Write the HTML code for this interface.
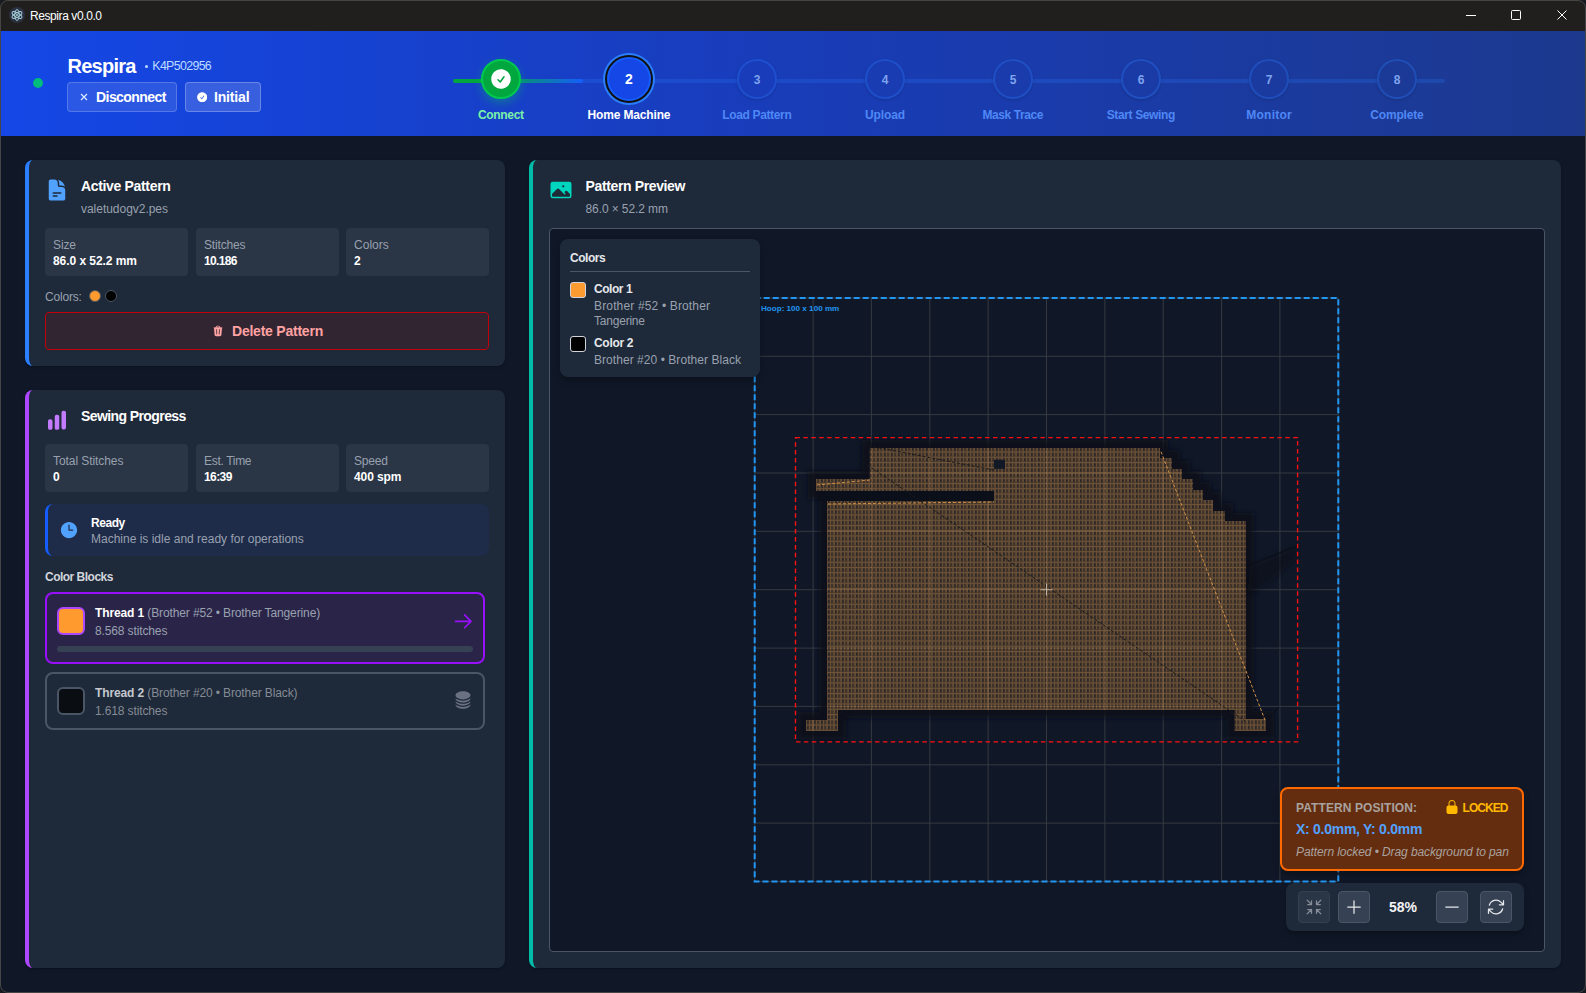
<!DOCTYPE html><html><head><meta charset="utf-8"><style>
*{margin:0;padding:0;box-sizing:border-box}
html,body{width:1586px;height:993px;overflow:hidden;background:#101828;font-family:"Liberation Sans",sans-serif}
.a{position:absolute}
.t{position:absolute;white-space:nowrap}
</style></head><body>
<div class="a" style="left:0px;top:0px;width:1586px;height:993px;background:#181b20;"></div>
<div class="a" style="left:0px;top:0px;width:1586px;height:993px;background:#101828;border-radius:8px;"></div>
<div class="a" style="left:0px;top:0px;width:1586px;height:31px;background:#201f1e;border-radius:8px 8px 0 0;"></div>
<svg class="a" style="left:9px;top:7px;" width="16" height="16" viewBox="0 0 16 16"><circle cx="8" cy="8" r="8" fill="#2b3140"/><g fill="none" stroke="#a9d6e0" stroke-width="0.9"><ellipse cx="8" cy="8" rx="5.5" ry="2.2" transform="rotate(30 8 8)"/><ellipse cx="8" cy="8" rx="5.5" ry="2.2" transform="rotate(-30 8 8)"/><ellipse cx="8" cy="8" rx="2.2" ry="5.5"/></g><circle cx="8" cy="8" r="1" fill="#a9d6e0"/></svg>
<div class="t" style="left:30px;top:9.64px;font-size:12px;line-height:12px;color:#ffffff;font-weight:400;letter-spacing:-0.414px;">Respira v0.0.0</div>
<div class="a" style="left:1466px;top:15px;width:10px;height:1px;background:#fff;"></div>
<div class="a" style="left:1511px;top:10px;width:10px;height:10px;border:1px solid #fff;border-radius:1.5px;"></div>
<svg class="a" style="left:1557px;top:10px;" width="10" height="10" viewBox="0 0 10 10"><path d="M0.5 0.5L9.5 9.5M9.5 0.5L0.5 9.5" stroke="#fff" stroke-width="1"/></svg>
<div class="a" style="left:1px;top:31px;width:1584px;height:105px;background:linear-gradient(90deg,#1447e6 0%,#193cb8 50%,#1c398e 100%);"></div>
<div class="a" style="left:33px;top:78px;width:10px;height:10px;background:#00bc7d;border-radius:50%;"></div>
<div class="t" style="left:67.5px;top:56.07px;font-size:20px;line-height:20px;color:#fff;font-weight:700;letter-spacing:-0.729px;">Respira</div>
<div class="a" style="left:144.8px;top:64.6px;width:3.6px;height:3.6px;background:#bedbff;border-radius:50%;"></div>
<div class="t" style="left:152.3px;top:60.10px;font-size:12.4px;line-height:12.4px;color:#bedbff;font-weight:400;letter-spacing:-0.664px;">K4P502956</div>
<div class="a" style="left:67px;top:82px;width:110px;height:30px;background:rgba(255,255,255,0.1);border:1px solid rgba(255,255,255,0.2);border-radius:4px;"></div>
<svg class="a" style="left:78px;top:91px;" width="12" height="12" viewBox="0 0 12 12"><path d="M3 3L9 9M9 3L3 9" stroke="#dbeafe" stroke-width="1.2" fill="none"/></svg>
<div class="t" style="left:96px;top:89.85px;font-size:14px;line-height:14px;color:#ffffff;font-weight:700;letter-spacing:-0.562px;">Disconnect</div>
<div class="a" style="left:185px;top:82px;width:76px;height:30px;background:rgba(255,255,255,0.15);border:1px solid rgba(255,255,255,0.25);border-radius:4px;"></div>
<svg class="a" style="left:196.8px;top:91.8px;" width="10.4" height="10.4" viewBox="2 2 20 20"><path fill="#fff" fill-rule="evenodd" d="M2.25 12c0-5.385 4.365-9.75 9.75-9.75s9.75 4.365 9.75 9.75-4.365 9.75-9.75 9.75S2.25 17.385 2.25 12Zm13.36-1.814a.75.75 0 1 0-1.22-.872l-3.236 4.53L9.53 12.22a.75.75 0 0 0-1.06 1.06l2.25 2.25a.75.75 0 0 0 1.14-.094l3.75-5.25Z"/></svg>
<div class="t" style="left:214px;top:89.85px;font-size:14px;line-height:14px;color:#ffffff;font-weight:700;letter-spacing:-0.160px;">Initial</div>
<div class="a" style="left:453px;top:79px;width:992px;height:4px;background:rgba(43,127,255,0.22);border-radius:2px;"></div>
<div class="a" style="left:453px;top:79px;width:130px;height:4px;background:linear-gradient(90deg,#00a63e 0%,#00a63e 30%,#155dfc 100%);border-radius:2px;"></div>
<div class="a" style="left:481px;top:59px;width:40px;height:40px;background:#00a63e;border:2px solid #00c950;border-radius:50%;box-shadow:0 4px 10px rgba(0,201,80,0.35);"></div>
<svg class="a" style="left:491px;top:69px;" width="20" height="20" viewBox="2 2 20 20"><path fill="#fff" fill-rule="evenodd" d="M2.25 12c0-5.385 4.365-9.75 9.75-9.75s9.75 4.365 9.75 9.75-4.365 9.75-9.75 9.75S2.25 17.385 2.25 12Zm13.36-1.814a.75.75 0 1 0-1.22-.872l-3.236 4.53L9.53 12.22a.75.75 0 0 0-1.06 1.06l2.25 2.25a.75.75 0 0 0 1.14-.094l3.75-5.25Z"/></svg>
<div class="t" style="left:501px;top:108.94px;font-size:12px;line-height:12px;color:#7bf1a8;font-weight:700;letter-spacing:-0.334px;transform:translateX(-50%);margin-left:-0.167px;">Connect</div>
<div class="a" style="left:603px;top:53px;width:52px;height:52px;background:#2b7fff;border-radius:50%;"></div>
<div class="a" style="left:605px;top:55px;width:48px;height:48px;background:#111111;border-radius:50%;"></div>
<div class="a" style="left:607px;top:57px;width:44px;height:44px;background:#1447e6;border:2px solid #155dfc;border-radius:50%;"></div>
<div class="t" style="left:629px;top:72.35px;font-size:14px;line-height:14px;color:#fff;font-weight:700;transform:translateX(-50%);">2</div>
<div class="t" style="left:629px;top:108.94px;font-size:12px;line-height:12px;color:#ffffff;font-weight:700;letter-spacing:-0.154px;transform:translateX(-50%);margin-left:-0.077px;">Home Machine</div>
<div class="a" style="left:737px;top:59px;width:40px;height:40px;background:#193cba;border:2px solid rgba(43,127,255,0.3);border-radius:50%;box-shadow:0 1px 3px rgba(0,0,0,0.15);"></div>
<div class="t" style="left:757px;top:73.84px;font-size:12px;line-height:12px;color:#7fa4ee;font-weight:700;transform:translateX(-50%);">3</div>
<div class="t" style="left:757px;top:108.94px;font-size:12px;line-height:12px;color:#4f88f5;font-weight:700;letter-spacing:-0.350px;transform:translateX(-50%);margin-left:-0.175px;">Load Pattern</div>
<div class="a" style="left:865px;top:59px;width:40px;height:40px;background:#193cb3;border:2px solid rgba(43,127,255,0.3);border-radius:50%;box-shadow:0 1px 3px rgba(0,0,0,0.15);"></div>
<div class="t" style="left:885px;top:73.84px;font-size:12px;line-height:12px;color:#7fa4ee;font-weight:700;transform:translateX(-50%);">4</div>
<div class="t" style="left:885px;top:108.94px;font-size:12px;line-height:12px;color:#4f88f5;font-weight:700;letter-spacing:-0.133px;transform:translateX(-50%);margin-left:-0.067px;">Upload</div>
<div class="a" style="left:993px;top:59px;width:40px;height:40px;background:#1a3bac;border:2px solid rgba(43,127,255,0.3);border-radius:50%;box-shadow:0 1px 3px rgba(0,0,0,0.15);"></div>
<div class="t" style="left:1013px;top:73.84px;font-size:12px;line-height:12px;color:#7fa4ee;font-weight:700;transform:translateX(-50%);">5</div>
<div class="t" style="left:1013px;top:108.94px;font-size:12px;line-height:12px;color:#4f88f5;font-weight:700;letter-spacing:-0.413px;transform:translateX(-50%);margin-left:-0.206px;">Mask Trace</div>
<div class="a" style="left:1121px;top:59px;width:40px;height:40px;background:#1a3ba6;border:2px solid rgba(43,127,255,0.3);border-radius:50%;box-shadow:0 1px 3px rgba(0,0,0,0.15);"></div>
<div class="t" style="left:1141px;top:73.84px;font-size:12px;line-height:12px;color:#7fa4ee;font-weight:700;transform:translateX(-50%);">6</div>
<div class="t" style="left:1141px;top:108.94px;font-size:12px;line-height:12px;color:#4f88f5;font-weight:700;letter-spacing:-0.371px;transform:translateX(-50%);margin-left:-0.186px;">Start Sewing</div>
<div class="a" style="left:1249px;top:59px;width:40px;height:40px;background:#1b3a9f;border:2px solid rgba(43,127,255,0.3);border-radius:50%;box-shadow:0 1px 3px rgba(0,0,0,0.15);"></div>
<div class="t" style="left:1269px;top:73.84px;font-size:12px;line-height:12px;color:#7fa4ee;font-weight:700;transform:translateX(-50%);">7</div>
<div class="t" style="left:1269px;top:108.94px;font-size:12px;line-height:12px;color:#4f88f5;font-weight:700;letter-spacing:0.219px;transform:translateX(-50%);margin-left:0.109px;">Monitor</div>
<div class="a" style="left:1377px;top:59px;width:40px;height:40px;background:#1b3a98;border:2px solid rgba(43,127,255,0.3);border-radius:50%;box-shadow:0 1px 3px rgba(0,0,0,0.15);"></div>
<div class="t" style="left:1397px;top:73.84px;font-size:12px;line-height:12px;color:#7fa4ee;font-weight:700;transform:translateX(-50%);">8</div>
<div class="t" style="left:1397px;top:108.94px;font-size:12px;line-height:12px;color:#4f88f5;font-weight:700;letter-spacing:-0.182px;transform:translateX(-50%);margin-left:-0.091px;">Complete</div>
<div class="a" style="left:25px;top:160px;width:480px;height:206px;background:#1e2939;border-left:4px solid #2b7fff;border-radius:8px;box-shadow:0 1px 3px rgba(0,0,0,0.3);"></div>
<svg class="a" style="left:45px;top:178px;" width="24" height="24" viewBox="0 0 24 24"><path fill="#51a2ff" fill-rule="evenodd" d="M5.625 1.5c-1.036 0-1.875.84-1.875 1.875v17.25c0 1.035.84 1.875 1.875 1.875h12.75c1.035 0 1.875-.84 1.875-1.875V12.75A3.75 3.75 0 0 0 16.5 9h-1.875a1.875 1.875 0 0 1-1.875-1.875V5.25A3.75 3.75 0 0 0 9 1.5H5.625ZM7.5 15a.75.75 0 0 1 .75-.75h7.5a.75.75 0 0 1 0 1.5h-7.5A.75.75 0 0 1 7.5 15Zm.75 2.25a.75.75 0 0 0 0 1.5H12a.75.75 0 0 0 0-1.5H8.25Z"/><path fill="#51a2ff" d="M12.971 1.816A5.23 5.23 0 0 1 14.25 5.25v1.875c0 .207.168.375.375.375H16.5a5.23 5.23 0 0 1 3.434 1.279 9.768 9.768 0 0 0-6.963-6.963Z"/></svg>
<div class="t" style="left:81px;top:179.35px;font-size:14px;line-height:14px;color:#fff;font-weight:700;letter-spacing:-0.334px;">Active Pattern</div>
<div class="t" style="left:81px;top:202.84px;font-size:12px;line-height:12px;color:#99a1af;font-weight:400;letter-spacing:-0.029px;">valetudogv2.pes</div>
<div class="a" style="left:45px;top:228px;width:143px;height:48px;background:#2a3546;border-radius:4px;"></div>
<div class="t" style="left:53px;top:238.84px;font-size:12px;line-height:12px;color:#99a1af;font-weight:400;letter-spacing:-0.115px;">Size</div>
<div class="t" style="left:53px;top:254.84px;font-size:12px;line-height:12px;color:#fff;font-weight:700;letter-spacing:-0.056px;">86.0 x 52.2 mm</div>
<div class="a" style="left:196px;top:228px;width:143px;height:48px;background:#2a3546;border-radius:4px;"></div>
<div class="t" style="left:204px;top:238.84px;font-size:12px;line-height:12px;color:#99a1af;font-weight:400;letter-spacing:-0.155px;">Stitches</div>
<div class="t" style="left:204px;top:254.84px;font-size:12px;line-height:12px;color:#fff;font-weight:700;letter-spacing:-0.661px;">10.186</div>
<div class="a" style="left:346px;top:228px;width:143px;height:48px;background:#2a3546;border-radius:4px;"></div>
<div class="t" style="left:354px;top:238.84px;font-size:12px;line-height:12px;color:#99a1af;font-weight:400;letter-spacing:0.025px;">Colors</div>
<div class="t" style="left:354px;top:254.84px;font-size:12px;line-height:12px;color:#fff;font-weight:700;letter-spacing:0.326px;">2</div>
<div class="t" style="left:45px;top:291.04px;font-size:12px;line-height:12px;color:#99a1af;font-weight:400;letter-spacing:-0.185px;">Colors:</div>
<div class="a" style="left:89px;top:290px;width:12px;height:12px;background:#ff9a2e;border-radius:50%;border:1px solid #4a5565;"></div>
<div class="a" style="left:105px;top:290px;width:12px;height:12px;background:#000;border-radius:50%;border:1px solid #4a5565;"></div>
<div class="a" style="left:45px;top:312px;width:444px;height:38px;background:rgba(130,24,26,0.2);border:1px solid #c10007;border-radius:4px;"></div>
<svg class="a" style="left:212px;top:325px;" width="12" height="12" viewBox="0 0 24 24"><path fill="#ffa2a2" fill-rule="evenodd" d="M16.5 4.478v.227a48.816 48.816 0 0 1 3.878.512.75.75 0 1 1-.256 1.478l-.209-.035-1.005 13.07a3 3 0 0 1-2.991 2.77H8.084a3 3 0 0 1-2.991-2.77L4.087 6.66l-.209.035a.75.75 0 0 1-.256-1.478A48.567 48.567 0 0 1 7.5 4.705v-.227c0-1.564 1.213-2.9 2.816-2.951a52.662 52.662 0 0 1 3.369 0c1.603.051 2.815 1.387 2.815 2.951Zm-6.136-1.452a51.196 51.196 0 0 1 3.273 0C14.39 3.05 15 3.684 15 4.478v.113a49.488 49.488 0 0 0-6 0v-.113c0-.794.609-1.428 1.364-1.452Zm-.355 5.945a.75.75 0 1 0-1.5.058l.347 9a.75.75 0 1 0 1.499-.058l-.346-9Zm5.48.058a.75.75 0 1 0-1.498-.058l-.347 9a.75.75 0 0 0 1.5.058l.345-9Z"/></svg>
<div class="t" style="left:232px;top:324.35px;font-size:14px;line-height:14px;color:#ffa2a2;font-weight:700;letter-spacing:-0.227px;">Delete Pattern</div>
<div class="a" style="left:25px;top:390px;width:480px;height:578px;background:#1e2939;border-left:4px solid #ad46ff;border-radius:8px;box-shadow:0 1px 3px rgba(0,0,0,0.3);"></div>
<svg class="a" style="left:45px;top:408px;" width="24" height="24" viewBox="0 0 24 24"><path fill="#c27aff" d="M18.375 2.625a1.875 1.875 0 0 0-1.875 1.875v15a1.875 1.875 0 0 0 1.875 1.875h.75a1.875 1.875 0 0 0 1.875-1.875v-15a1.875 1.875 0 0 0-1.875-1.875h-.75ZM9.75 8.625c0-1.036.84-1.875 1.875-1.875h.75c1.036 0 1.875.84 1.875 1.875v11.25c0 1.035-.84 1.875-1.875 1.875h-.75a1.875 1.875 0 0 1-1.875-1.875V8.625ZM3 13.125c0-1.036.84-1.875 1.875-1.875h.75c1.036 0 1.875.84 1.875 1.875v6.75c0 1.035-.84 1.875-1.875 1.875h-.75A1.875 1.875 0 0 1 3 19.875v-6.75Z"/></svg>
<div class="t" style="left:81px;top:409.05px;font-size:14px;line-height:14px;color:#fff;font-weight:700;letter-spacing:-0.592px;">Sewing Progress</div>
<div class="a" style="left:45px;top:444px;width:143px;height:48px;background:#2a3546;border-radius:4px;"></div>
<div class="t" style="left:53px;top:454.84px;font-size:12px;line-height:12px;color:#99a1af;font-weight:400;letter-spacing:-0.075px;">Total Stitches</div>
<div class="t" style="left:53px;top:471.04px;font-size:12px;line-height:12px;color:#fff;font-weight:700;letter-spacing:0.326px;">0</div>
<div class="a" style="left:196px;top:444px;width:143px;height:48px;background:#2a3546;border-radius:4px;"></div>
<div class="t" style="left:204px;top:454.84px;font-size:12px;line-height:12px;color:#99a1af;font-weight:400;letter-spacing:-0.314px;">Est. Time</div>
<div class="t" style="left:204px;top:471.04px;font-size:12px;line-height:12px;color:#fff;font-weight:700;letter-spacing:-0.598px;">16:39</div>
<div class="a" style="left:346px;top:444px;width:143px;height:48px;background:#2a3546;border-radius:4px;"></div>
<div class="t" style="left:354px;top:454.84px;font-size:12px;line-height:12px;color:#99a1af;font-weight:400;letter-spacing:-0.225px;">Speed</div>
<div class="t" style="left:354px;top:471.04px;font-size:12px;line-height:12px;color:#fff;font-weight:700;letter-spacing:-0.089px;">400 spm</div>
<div class="a" style="left:45px;top:504px;width:444px;height:52px;background:rgba(28,57,142,0.2);border-left:3px solid #155dfc;border-radius:8px;"></div>
<svg class="a" style="left:59px;top:520px;" width="20" height="20" viewBox="0 0 24 24"><path fill="#51a2ff" fill-rule="evenodd" d="M12 2.25c-5.385 0-9.75 4.365-9.75 9.75s4.365 9.75 9.75 9.75 9.75-4.365 9.75-9.75S17.385 2.25 12 2.25ZM12.75 6a.75.75 0 0 0-1.5 0v6c0 .414.336.75.75.75h4.5a.75.75 0 0 0 0-1.5h-3.75V6Z"/></svg>
<div class="t" style="left:91px;top:516.64px;font-size:12px;line-height:12px;color:#fff;font-weight:700;letter-spacing:-0.455px;">Ready</div>
<div class="t" style="left:91px;top:532.54px;font-size:12px;line-height:12px;color:#99a1af;font-weight:400;">Machine is idle and ready for operations</div>
<div class="t" style="left:45px;top:570.84px;font-size:12px;line-height:12px;color:#d1d5dc;font-weight:700;letter-spacing:-0.511px;">Color Blocks</div>
<div class="a" style="left:45px;top:592px;width:440px;height:72px;background:rgba(89,22,139,0.2);border:2px solid #9810fa;border-radius:8px;"></div>
<div class="a" style="left:57px;top:607px;width:28px;height:28px;background:#ff9a2e;border:2px solid #ad46ff;border-radius:6px;"></div>
<div class="t" style="left:95px;top:607.04px;font-size:12px;line-height:12px;color:#99a1af;letter-spacing:-0.12px"><b style="color:#fff">Thread 1</b> (Brother #52 &#8226; Brother Tangerine)</div>
<div class="t" style="left:95px;top:624.94px;font-size:12px;line-height:12px;color:#99a1af;font-weight:400;letter-spacing:-0.127px;">8.568 stitches</div>
<div class="a" style="left:57px;top:646px;width:416px;height:6px;background:#364153;border-radius:3px;"></div>
<svg class="a" style="left:452.7px;top:610.7px;" width="20.6" height="20.6" viewBox="0 0 24 24"><path d="M13.5 4.5 21 12m0 0-7.5 7.5M21 12H3" fill="none" stroke="#9810fa" stroke-width="2" stroke-linecap="round" stroke-linejoin="round"/></svg>
<div class="a" style="left:45px;top:672px;width:440px;height:58px;background:#1e2939;border:2px solid #4a5565;border-radius:8px;"></div>
<div class="a" style="left:57px;top:687px;width:28px;height:28px;background:#0a0d12;border:2px solid #4a5565;border-radius:6px;"></div>
<div class="t" style="left:95px;top:686.84px;font-size:12px;line-height:12px;color:#858b95;letter-spacing:-0.12px"><b style="color:#c4c8ce">Thread 2</b> (Brother #20 &#8226; Brother Black)</div>
<div class="t" style="left:95px;top:704.84px;font-size:12px;line-height:12px;color:#858b95;font-weight:400;letter-spacing:-0.127px;">1.618 stitches</div>
<svg class="a" style="left:453px;top:690px;" width="20" height="20" viewBox="0 0 24 24"><g fill="#6a7282"><path d="M21 6.375c0 2.692-4.03 4.875-9 4.875S3 9.067 3 6.375 7.03 1.5 12 1.5s9 2.183 9 4.875Z"/><path d="M12 12.75c2.685 0 5.19-.586 7.078-1.609a8.283 8.283 0 0 0 1.897-1.384c.016.121.025.244.025.368C21 12.817 16.97 15 12 15s-9-2.183-9-4.875c0-.124.009-.247.025-.368a8.285 8.285 0 0 0 1.897 1.384C6.809 12.164 9.315 12.75 12 12.75Z"/><path d="M12 16.5c2.685 0 5.19-.586 7.078-1.609a8.282 8.282 0 0 0 1.897-1.384c.016.121.025.244.025.368 0 2.692-4.03 4.875-9 4.875s-9-2.183-9-4.875c0-.124.009-.247.025-.368a8.284 8.284 0 0 0 1.897 1.384C6.809 15.914 9.315 16.5 12 16.5Z"/><path d="M12 20.25c2.685 0 5.19-.586 7.078-1.609a8.282 8.282 0 0 0 1.897-1.384c.016.121.025.244.025.368 0 2.692-4.03 4.875-9 4.875s-9-2.183-9-4.875c0-.124.009-.247.025-.368a8.284 8.284 0 0 0 1.897 1.384C6.809 19.664 9.315 20.25 12 20.25Z"/></g></svg>
<div class="a" style="left:529px;top:160px;width:1032px;height:808px;background:#1e2939;border-left:4px solid #00bba7;border-radius:8px;box-shadow:0 1px 3px rgba(0,0,0,0.3);"></div>
<svg class="a" style="left:549px;top:178px;" width="24" height="24" viewBox="0 0 24 24"><path fill="#00d5be" fill-rule="evenodd" d="M1.5 6a2.25 2.25 0 0 1 2.25-2.25h16.5A2.25 2.25 0 0 1 22.5 6v12a2.25 2.25 0 0 1-2.25 2.25H3.75A2.25 2.25 0 0 1 1.5 18V6ZM3 16.06V18c0 .414.336.75.75.75h16.5A.75.75 0 0 0 21 18v-1.94l-2.69-2.689a1.5 1.5 0 0 0-2.12 0l-.88.879.97.97a.75.75 0 1 1-1.06 1.06l-5.16-5.159a1.5 1.5 0 0 0-2.12 0L3 16.061Zm10.125-7.81a1.125 1.125 0 1 1 2.25 0 1.125 1.125 0 0 1-2.25 0Z"/></svg>
<div class="t" style="left:585.5px;top:179.15px;font-size:14px;line-height:14px;color:#fff;font-weight:700;letter-spacing:-0.368px;">Pattern Preview</div>
<div class="t" style="left:585.5px;top:202.54px;font-size:12px;line-height:12px;color:#99a1af;font-weight:400;letter-spacing:-0.094px;">86.0 &#215; 52.2 mm</div>
<div class="a" style="left:549px;top:228px;width:996px;height:724px;background:#101828;border:1px solid #4a5565;border-radius:4px;overflow:hidden;"></div>
<svg class="a" style="left:0px;top:0px;pointer-events:none;" width="1586" height="993" viewBox="0 0 1586 993"><g stroke="#363a40" stroke-width="1"><line x1="754.7" y1="297.9" x2="754.7" y2="881.5"/><line x1="754.7" y1="297.9" x2="1338.3" y2="297.9"/><line x1="813.1" y1="297.9" x2="813.1" y2="881.5"/><line x1="754.7" y1="356.3" x2="1338.3" y2="356.3"/><line x1="871.4" y1="297.9" x2="871.4" y2="881.5"/><line x1="754.7" y1="414.6" x2="1338.3" y2="414.6"/><line x1="929.8" y1="297.9" x2="929.8" y2="881.5"/><line x1="754.7" y1="473.0" x2="1338.3" y2="473.0"/><line x1="988.1" y1="297.9" x2="988.1" y2="881.5"/><line x1="754.7" y1="531.3" x2="1338.3" y2="531.3"/><line x1="1046.5" y1="297.9" x2="1046.5" y2="881.5"/><line x1="754.7" y1="589.7" x2="1338.3" y2="589.7"/><line x1="1104.9" y1="297.9" x2="1104.9" y2="881.5"/><line x1="754.7" y1="648.1" x2="1338.3" y2="648.1"/><line x1="1163.2" y1="297.9" x2="1163.2" y2="881.5"/><line x1="754.7" y1="706.4" x2="1338.3" y2="706.4"/><line x1="1221.6" y1="297.9" x2="1221.6" y2="881.5"/><line x1="754.7" y1="764.8" x2="1338.3" y2="764.8"/><line x1="1279.9" y1="297.9" x2="1279.9" y2="881.5"/><line x1="754.7" y1="823.1" x2="1338.3" y2="823.1"/><line x1="1338.3" y1="297.9" x2="1338.3" y2="881.5"/><line x1="754.7" y1="881.5" x2="1338.3" y2="881.5"/></g><g opacity="0.93"><defs><pattern id="st" patternUnits="userSpaceOnUse" x="0" y="0" width="7" height="5.25"><rect width="7" height="5.25" fill="#4c3a2b"/><rect x="0" y="0" width="7" height="1" fill="#775a3b"/><rect x="0.6" y="0.9" width="0.9" height="3.8" fill="#836341"/><rect x="4.1" y="0.9" width="0.9" height="3.8" fill="#735638"/><rect x="2.5" y="1.3" width="0.8" height="3.2" fill="#121827"/><rect x="5.7" y="1.6" width="0.6" height="2.6" fill="#2e2a24"/></pattern><filter id="bl" x="-10%" y="-10%" width="120%" height="120%"><feGaussianBlur stdDeviation="2.5"/></filter></defs><polygon points="869.8,448 1160,448 1160,458 1172,458 1172,469 1182,469 1182,479 1193,479 1193,490 1203,490 1203,500 1213,500 1213,511 1225,511 1225,521 1246,521 1246,719 1266,719 1266,731 1234.5,731 1234.5,710 838,710 838,731 806,731 806,720 827,720 827,501 994,501 994,491 816,491 816,479 869.8,479" fill="#0a0e17" stroke="#0a0e17" stroke-width="16" stroke-linejoin="miter" opacity="0.8" filter="url(#bl)"/><polygon points="869.8,448 1160,448 1160,458 1172,458 1172,469 1182,469 1182,479 1193,479 1193,490 1203,490 1203,500 1213,500 1213,511 1225,511 1225,521 1246,521 1246,719 1266,719 1266,731 1234.5,731 1234.5,710 838,710 838,731 806,731 806,720 827,720 827,501 994,501 994,491 816,491 816,479 869.8,479" fill="url(#st)"/><rect x="818" y="491" width="176" height="10" fill="#0b0f18"/><rect x="994" y="459.8" width="11" height="9" fill="#121826"/><clipPath id="fc"><polygon points="869.8,448 1160,448 1160,458 1172,458 1172,469 1182,469 1182,479 1193,479 1193,490 1203,490 1203,500 1213,500 1213,511 1225,511 1225,521 1246,521 1246,719 1266,719 1266,731 1234.5,731 1234.5,710 838,710 838,731 806,731 806,720 827,720 827,501 994,501 994,491 816,491 816,479 869.8,479"/></clipPath><g clip-path="url(#fc)" stroke="rgba(215,165,105,0.30)" stroke-width="1"><line x1="754.7" y1="430" x2="754.7" y2="740"/><line x1="790" y1="297.9" x2="1300" y2="297.9"/><line x1="813.1" y1="430" x2="813.1" y2="740"/><line x1="790" y1="356.3" x2="1300" y2="356.3"/><line x1="871.4" y1="430" x2="871.4" y2="740"/><line x1="790" y1="414.6" x2="1300" y2="414.6"/><line x1="929.8" y1="430" x2="929.8" y2="740"/><line x1="790" y1="473.0" x2="1300" y2="473.0"/><line x1="988.1" y1="430" x2="988.1" y2="740"/><line x1="790" y1="531.3" x2="1300" y2="531.3"/><line x1="1046.5" y1="430" x2="1046.5" y2="740"/><line x1="790" y1="589.7" x2="1300" y2="589.7"/><line x1="1104.9" y1="430" x2="1104.9" y2="740"/><line x1="790" y1="648.1" x2="1300" y2="648.1"/><line x1="1163.2" y1="430" x2="1163.2" y2="740"/><line x1="790" y1="706.4" x2="1300" y2="706.4"/><line x1="1221.6" y1="430" x2="1221.6" y2="740"/><line x1="790" y1="764.8" x2="1300" y2="764.8"/><line x1="1279.9" y1="430" x2="1279.9" y2="740"/><line x1="790" y1="823.1" x2="1300" y2="823.1"/><line x1="1338.3" y1="430" x2="1338.3" y2="740"/><line x1="790" y1="881.5" x2="1300" y2="881.5"/></g><line x1="858.7" y1="443.9" x2="994.6" y2="470.2" stroke="#1a1a1a" stroke-width="1" stroke-dasharray="3 2"/><line x1="858.7" y1="459.1" x2="1245" y2="721" stroke="#1a1a1a" stroke-width="1" stroke-dasharray="3 2"/><line x1="1161" y1="451.7" x2="1265" y2="720" stroke="#e09a48" stroke-width="1" stroke-dasharray="3 2"/><line x1="817" y1="485" x2="870" y2="480" stroke="#e09a48" stroke-width="1" stroke-dasharray="3 2"/><line x1="828" y1="504" x2="994" y2="502" stroke="#e09a48" stroke-width="1" stroke-dasharray="3 2"/><polygon points="1250,566 1297,547 1297,558 1270,582 1256,592 1248,590" fill="#0b0f18" opacity="0.55" filter="url(#bl)"/><line x1="1255" y1="563" x2="1297" y2="546" stroke="#0b0f18" stroke-width="1.2"/><line x1="1266" y1="720" x2="1279" y2="707" stroke="#0b0f18" stroke-width="1.2"/><path d="M1040.5 589.7H1052.5M1046.5 583.7V595.7" stroke="#c8bba8" stroke-width="1"/></g><rect x="754.7" y="297.9" width="583.6" height="583.6" fill="none" stroke="#2196f3" stroke-width="2" stroke-dasharray="6 3"/><text x="761" y="311" font-family="Liberation Sans" font-weight="700" font-size="8.1" fill="#2196f3">Hoop: 100 x 100 mm</text><rect x="795.5" y="437.6" width="502.1" height="304.3" fill="none" stroke="#ff1010" stroke-width="1.4" stroke-dasharray="4.5 3.4"/></svg>
<div class="a" style="left:560px;top:239px;width:200px;height:138px;background:#1e2939;border-radius:8px;box-shadow:0 4px 6px rgba(0,0,0,0.3);"></div>
<div class="t" style="left:570px;top:251.84px;font-size:12px;line-height:12px;color:#e5e7eb;font-weight:700;letter-spacing:-0.481px;">Colors</div>
<div class="a" style="left:570px;top:271px;width:180px;height:1px;background:#4a5565;"></div>
<div class="a" style="left:570px;top:282px;width:16px;height:16px;background:#fb9b30;border:1px solid #d1d5db;border-radius:3px;"></div>
<div class="t" style="left:594px;top:282.94px;font-size:12px;line-height:12px;color:#e5e7eb;font-weight:700;letter-spacing:-0.457px;">Color 1</div>
<div class="t" style="left:594px;top:299.64px;font-size:12px;line-height:12px;color:#99a1af;font-weight:400;letter-spacing:0.153px;">Brother #52 &#8226; Brother</div>
<div class="t" style="left:594px;top:314.64px;font-size:12px;line-height:12px;color:#99a1af;font-weight:400;letter-spacing:-0.214px;">Tangerine</div>
<div class="a" style="left:570px;top:336px;width:16px;height:16px;background:#000;border:1px solid #d1d5db;border-radius:3px;"></div>
<div class="t" style="left:594px;top:336.84px;font-size:12px;line-height:12px;color:#e5e7eb;font-weight:700;letter-spacing:-0.307px;">Color 2</div>
<div class="t" style="left:594px;top:353.64px;font-size:12px;line-height:12px;color:#99a1af;font-weight:400;letter-spacing:0.053px;">Brother #20 &#8226; Brother Black</div>
<div class="a" style="left:1280px;top:787px;width:244px;height:84px;background:#652d10;border:2px solid #ff6900;border-radius:8px;box-shadow:0 4px 6px rgba(0,0,0,0.3);"></div>
<div class="t" style="left:1296px;top:801.84px;font-size:12px;line-height:12px;color:#a8a29e;font-weight:700;letter-spacing:0.090px;">PATTERN POSITION:</div>
<svg class="a" style="left:1446px;top:800px;" width="12" height="14" viewBox="3.75 1.5 16.5 21"><path fill="#ffb900" fill-rule="evenodd" d="M12 1.5a5.25 5.25 0 0 0-5.25 5.25v3a3 3 0 0 0-3 3v6.75a3 3 0 0 0 3 3h10.5a3 3 0 0 0 3-3v-6.75a3 3 0 0 0-3-3v-3c0-2.9-2.35-5.25-5.25-5.25Zm3.75 8.25v-3a3.75 3.75 0 1 0-7.5 0v3h7.5Z"/></svg>
<div class="t" style="left:1462.5px;top:801.84px;font-size:12px;line-height:12px;color:#ffb900;font-weight:700;letter-spacing:-0.934px;">LOCKED</div>
<div class="t" style="left:1296px;top:821.95px;font-size:14px;line-height:14px;color:#51a2ff;font-weight:700;letter-spacing:-0.270px;">X: 0.0mm, Y: 0.0mm</div>
<div class="t" style="left:1296px;top:845.54px;font-size:12px;line-height:12px;color:#a8a29e;font-weight:400;font-style:italic;letter-spacing:-0.093px;">Pattern locked &#8226; Drag background to pan</div>
<div class="a" style="left:1286px;top:883px;width:238px;height:48px;background:#1e2939;border-radius:8px;box-shadow:0 4px 6px rgba(0,0,0,0.3);"></div>
<div class="a" style="left:1298px;top:891px;width:32px;height:32px;background:#364153;border:1px solid #4a5565;border-radius:4px;opacity:0.5;"></div>
<svg class="a" style="left:1304px;top:897px;opacity:0.5;" width="20" height="20" viewBox="0 0 24 24"><path d="M9 9V4.5M9 9H4.5M9 9 3.75 3.75M9 15v4.5M9 15H4.5M9 15l-5.25 5.25M15 9h4.5M15 9V4.5M15 9l5.25-5.25M15 15h4.5M15 15v4.5m0-4.5 5.25 5.25" fill="none" stroke="#e5e7eb" stroke-width="1.5" stroke-linecap="round" stroke-linejoin="round"/></svg>
<div class="a" style="left:1338px;top:891px;width:32px;height:32px;background:#364153;border:1px solid #4a5565;border-radius:4px;opacity:1.0;"></div>
<svg class="a" style="left:1344px;top:897px;opacity:1.0;" width="20" height="20" viewBox="0 0 24 24"><path d="M12 4.5v15m7.5-7.5h-15" fill="none" stroke="#e5e7eb" stroke-width="1.5" stroke-linecap="round"/></svg>
<div class="t" style="left:1403px;top:900.45px;font-size:14px;line-height:14px;color:#f3f4f6;font-weight:700;transform:translateX(-50%);">58%</div>
<div class="a" style="left:1436px;top:891px;width:32px;height:32px;background:#364153;border:1px solid #4a5565;border-radius:4px;opacity:1.0;"></div>
<svg class="a" style="left:1442px;top:897px;opacity:1.0;" width="20" height="20" viewBox="0 0 24 24"><path d="M19.5 12h-15" fill="none" stroke="#e5e7eb" stroke-width="1.5" stroke-linecap="round"/></svg>
<div class="a" style="left:1480px;top:891px;width:32px;height:32px;background:#364153;border:1px solid #4a5565;border-radius:4px;opacity:1.0;"></div>
<svg class="a" style="left:1486px;top:897px;opacity:1.0;" width="20" height="20" viewBox="0 0 24 24"><path d="M16.023 9.348h4.992v-.001M2.985 19.644v-4.992m0 0h4.992m-4.993 0 3.181 3.183a8.25 8.25 0 0 0 13.803-3.7M4.031 9.865a8.25 8.25 0 0 1 13.803-3.7l3.181 3.182m0-4.991v4.99" fill="none" stroke="#e5e7eb" stroke-width="1.5" stroke-linecap="round" stroke-linejoin="round"/></svg>
<div class="a" style="left:0px;top:0px;width:1586px;height:993px;border:1px solid #454545;border-radius:8px;pointer-events:none;"></div>
</body></html>
